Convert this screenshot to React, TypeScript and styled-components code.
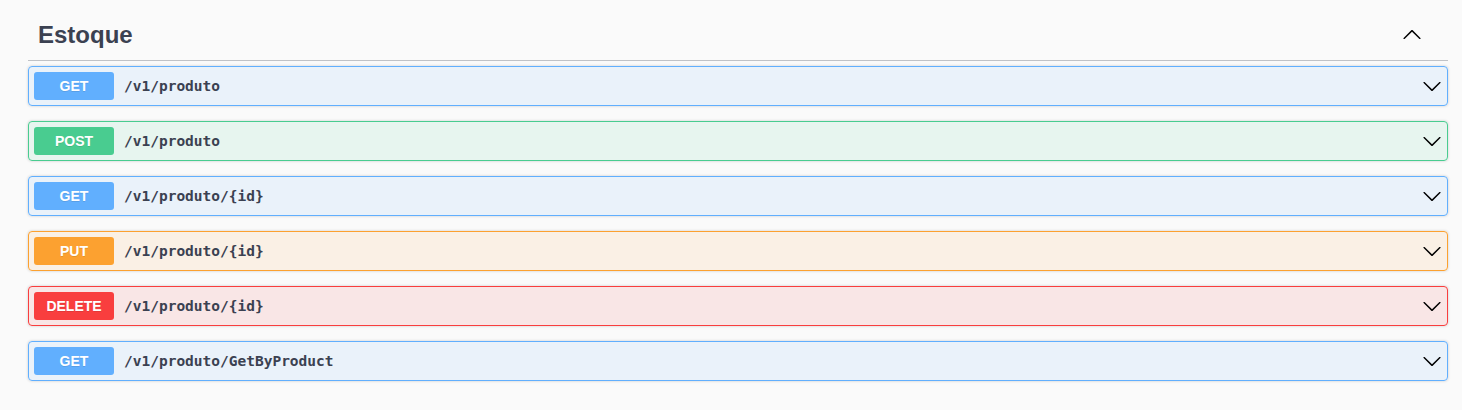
import styled, { createGlobalStyle } from "styled-components";

const GlobalStyle = createGlobalStyle`
  html, body {
    margin: 0;
    padding: 0;
    background: #fafafa;
  }
  body {
    font-family: "Liberation Sans", Arial, sans-serif;
  }
`;

const METHOD_COLORS: Record<string, string> = {
  GET: "97, 175, 254",
  POST: "73, 204, 144",
  PUT: "252, 161, 48",
  DELETE: "249, 62, 62",
};

const Wrapper = styled.div`
  padding: 0 14px 0 28px;
`;

const TagSection = styled.section`
  display: flex;
  flex-direction: column;
`;

const TagHeader = styled.div`
  display: flex;
  align-items: center;
  justify-content: space-between;
  height: 60px;
  padding: 0 26px 0 10px;
  border-bottom: 1px solid rgba(59, 65, 81, 0.3);
  margin-bottom: 5px;
`;

const TagTitle = styled.h3`
  margin: 0;
  padding-top: 10px;
  font-size: 24px;
  font-weight: 700;
  color: #3b4151;
`;

const ArrowButton = styled.button`
  display: flex;
  align-items: center;
  background: none;
  border: none;
  padding: 0;
  margin-top: 8px;
  cursor: pointer;
`;

const OpBlock = styled.div<{ $rgb: string }>`
  display: flex;
  align-items: center;
  height: 38px;
  padding: 0 5px;
  margin-bottom: 15px;
  border: 1px solid rgb(${(p) => p.$rgb});
  border-radius: 4px;
  background: rgba(${(p) => p.$rgb}, 0.1);
  box-shadow: 0 0 3px rgba(0, 0, 0, 0.19);
`;

const MethodBadge = styled.span<{ $rgb: string }>`
  display: flex;
  align-items: center;
  justify-content: center;
  width: 80px;
  height: 28px;
  border-radius: 3px;
  background: rgb(${(p) => p.$rgb});
  color: #fff;
  font-size: 14px;
  font-weight: 700;
  text-shadow: 0 1px 0 rgba(0, 0, 0, 0.1);
`;

const PathText = styled.span`
  flex: 1;
  padding: 0 10px;
  font-family: "DejaVu Sans Mono", "Liberation Mono", monospace;
  font-size: 14.5px;
  font-weight: 700;
  color: #3b4151;
`;

const Chevron = styled.svg`
  width: 20px;
  height: 20px;
  fill: #000;
`;

const operations = [
  { method: "GET", path: "/v1/produto" },
  { method: "POST", path: "/v1/produto" },
  { method: "GET", path: "/v1/produto/{id}" },
  { method: "PUT", path: "/v1/produto/{id}" },
  { method: "DELETE", path: "/v1/produto/{id}" },
  { method: "GET", path: "/v1/produto/GetByProduct" },
];

function ArrowDown() {
  return (
    <Chevron viewBox="0 0 20 20">
      <path d="M17.418 6.109c.272-.268.709-.268.979 0s.271.701 0 .969l-7.908 7.83c-.27.268-.707.268-.979 0l-7.908-7.83c-.27-.268-.27-.701 0-.969.271-.268.709-.268.979 0L10 13.25l7.418-7.141z" />
    </Chevron>
  );
}

function ArrowUp() {
  return (
    <Chevron viewBox="0 0 20 20">
      <path d="M17.418 14.908c.272.268.709.268.979 0s.271-.701 0-.969l-7.908-7.83c-.27-.268-.707-.268-.979 0l-7.908 7.83c-.27.268-.27.701 0 .969.271.268.709.268.979 0L10 7.767l7.418 7.141z" />
    </Chevron>
  );
}

export default function App() {
  return (
    <>
      <GlobalStyle />
      <Wrapper>
        <TagSection>
          <TagHeader>
            <TagTitle>Estoque</TagTitle>
            <ArrowButton aria-label="Recolher">
              <ArrowUp />
            </ArrowButton>
          </TagHeader>
          {operations.map((op, i) => (
            <OpBlock key={i} $rgb={METHOD_COLORS[op.method]}>
              <MethodBadge $rgb={METHOD_COLORS[op.method]}>{op.method}</MethodBadge>
              <PathText>{op.path}</PathText>
              <ArrowDown />
            </OpBlock>
          ))}
        </TagSection>
      </Wrapper>
    </>
  );
}
